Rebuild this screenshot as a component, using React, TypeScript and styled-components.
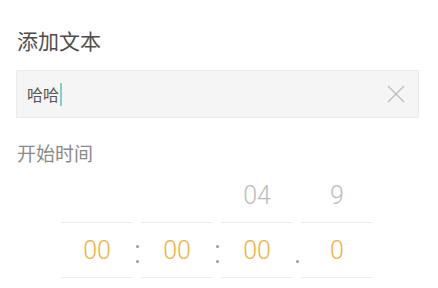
import styled, { createGlobalStyle } from "styled-components";

const GlobalStyle = createGlobalStyle`
  html, body {
    margin: 0;
    padding: 0;
    background: #fff;
  }
  body {
    font-family: Roboto, "Noto Sans CJK SC", sans-serif;
  }
`;

const Page = styled.div`
  width: 438px;
  height: 288px;
  overflow: hidden;
  box-sizing: border-box;
  padding: 25px 19px 0 16px;
`;

const Title = styled.div`
  font-family: "Noto Sans CJK SC", sans-serif;
  font-size: 21px;
  line-height: 30px;
  color: #4d4d4d;
  padding-left: 1px;
`;

const InputBox = styled.div`
  margin-top: 15px;
  height: 48px;
  box-sizing: border-box;
  border: 1px solid #ebebeb;
  background: #f5f5f5;
  display: flex;
  align-items: center;
  padding: 0 12px 0 10px;
`;

const InputText = styled.span`
  font-family: "Noto Sans CJK SC", sans-serif;
  font-size: 16px;
  color: #555;
  flex: 1;
  display: flex;
  align-items: center;
`;

const Caret = styled.span`
  display: inline-block;
  width: 2px;
  height: 23px;
  margin-left: 1px;
  background: #86cfc6;
`;

const ClearButton = styled.span`
  width: 20px;
  height: 20px;
  display: flex;
  align-items: center;
  justify-content: center;
`;

const Label = styled.div`
  margin-top: 20px;
  font-family: "Noto Sans CJK SC", sans-serif;
  font-size: 19px;
  line-height: 30px;
  color: #8a8a8a;
  padding-left: 1px;
`;

const Picker = styled.div`
  margin-left: 45px;
  display: flex;
`;

const Column = styled.div`
  width: 72px;
  display: flex;
  flex-direction: column;
`;

const Cell = styled.div<{ $selected?: boolean }>`
  height: ${(p) => (p.$selected ? "56px" : "54px")};
  box-sizing: border-box;
  display: flex;
  align-items: center;
  justify-content: center;
  font-family: Roboto, sans-serif;
  font-weight: 300;
  font-size: 25px;
  color: ${(p) => (p.$selected ? "#ecb440" : "#bdbdbd")};
  border-top: ${(p) => (p.$selected ? "1px solid #ececec" : "none")};
  border-bottom: ${(p) => (p.$selected ? "1px solid #ececec" : "none")};
`;

const Sep = styled.div`
  width: 8px;
  display: flex;
  flex-direction: column;
  align-items: center;
  padding-top: 54px;
`;

const SepCell = styled.div<{ $colon?: boolean }>`
  height: 56px;
  display: flex;
  flex-direction: column;
  align-items: center;
  justify-content: ${(p) => (p.$colon ? "center" : "flex-end")};
  gap: 12px;
  padding-top: ${(p) => (p.$colon ? "8px" : "0")};
  padding-bottom: ${(p) => (p.$colon ? "0" : "15px")};
  box-sizing: border-box;
`;

const Dot = styled.span`
  width: 3px;
  height: 3px;
  border-radius: 50%;
  background: #9a9a9a;
`;

const columns = [
  { above: "", value: "00" },
  { above: "", value: "00" },
  { above: "04", value: "00" },
  { above: "9", value: "0" },
];

export default function App() {
  return (
    <Page>
      <GlobalStyle />
      <Title>添加文本</Title>
      <InputBox>
        <InputText>
          哈哈
          <Caret />
        </InputText>
        <ClearButton>
          <svg width="18" height="18" viewBox="0 0 18 18">
            <path d="M1 1 L17 17 M17 1 L1 17" stroke="#bcbcbc" strokeWidth="1.2" fill="none" />
          </svg>
        </ClearButton>
      </InputBox>
      <Label>开始时间</Label>
      <Picker>
        {columns.map((c, i) => (
          <div key={i} style={{ display: "contents" }}>
            {i > 0 && (
              <Sep>
                {i < 3 ? (
                  <SepCell $colon>
                    <Dot />
                    <Dot />
                  </SepCell>
                ) : (
                  <SepCell>
                    <Dot />
                  </SepCell>
                )}
              </Sep>
            )}
            <Column>
              <Cell>{c.above}</Cell>
              <Cell $selected>{c.value}</Cell>
            </Column>
          </div>
        ))}
      </Picker>
    </Page>
  );
}
